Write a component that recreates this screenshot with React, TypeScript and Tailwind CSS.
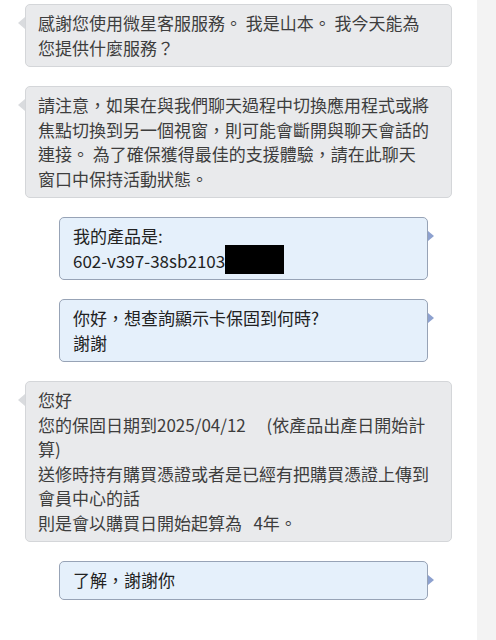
import React from 'react'

const font = { fontFamily: '"Noto Sans CJK TC", "Noto Sans", sans-serif' }

const AgentBubble: React.FC<{ lines: React.ReactNode[] }> = ({ lines }) => (
  <div className="relative w-[427px] rounded-[5px] border border-[#d4d6d9] bg-[#e9eaec] px-3 py-[6px] text-[17px] leading-[24.5px] text-[#3d3d3d]">
    <span className="absolute -left-[8px] top-[12px] h-0 w-0 border-y-[6px] border-r-[7px] border-y-transparent border-r-[#d9dbde]" />
    {lines.map((l, i) => (
      <div key={i} className="whitespace-pre">{l}</div>
    ))}
  </div>
)

const UserBubble: React.FC<{ lines: React.ReactNode[] }> = ({ lines }) => (
  <div className="relative ml-[34px] w-[369px] rounded-[5px] border border-[#97a3b6] bg-[#e5f0fb] pl-[13px] pr-3 py-[6px] text-[17px] leading-[24.5px] text-[#222]">
    <span className="absolute -right-[7px] top-[13px] h-0 w-0 border-y-[5px] border-l-[6px] border-y-transparent border-l-[#8da1cf]" />
    {lines.map((l, i) => (
      <div key={i} className="whitespace-pre">{l}</div>
    ))}
  </div>
)

export default function App() {
  return (
    <div className="flex h-screen w-full bg-white" style={font}>
      {/* chat log */}
      <div className="flex flex-1 flex-col gap-[19px] pl-[25px] pt-[4px]">
        <AgentBubble lines={['感謝您使用微星客服服務。 我是山本。 我今天能為', '您提供什麼服務？']} />
        <AgentBubble
          lines={[
            '請注意，如果在與我們聊天過程中切換應用程式或將',
            '焦點切換到另一個視窗，則可能會斷開與聊天會話的',
            '連接。 為了確保獲得最佳的支援體驗，請在此聊天',
            '窗口中保持活動狀態。',
          ]}
        />
        <UserBubble
          lines={[
            '我的產品是:',
            <>
              602-v397-38sb2103
              <span className="-mb-[1px] -mt-[5px] inline-block h-[29px] w-[59px] bg-black align-bottom" />
            </>,
          ]}
        />
        <UserBubble lines={['你好，想查詢顯示卡保固到何時?', '謝謝']} />
        <AgentBubble
          lines={[
            '您好',
            '您的保固日期到2025/04/12　 (依產品出產日開始計',
            '算)',
            '送修時持有購買憑證或者是已經有把購買憑證上傳到',
            '會員中心的話',
            '則是會以購買日開始起算為   4年。',
          ]}
        />
        <UserBubble lines={['了解，謝謝你']} />
      </div>

      {/* side rail */}
      <div className="w-[19px] shrink-0 bg-[#f3f3f3]" />
    </div>
  )
}
